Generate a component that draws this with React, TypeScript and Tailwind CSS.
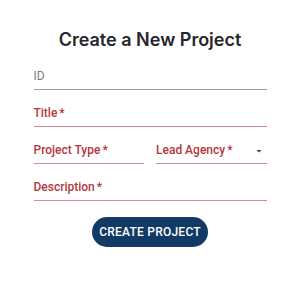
import React from 'react';

function Field({ label, required, error, arrow }: { label: string; required?: boolean; error?: boolean; arrow?: boolean }) {
  return (
    <div
      className={`flex h-[30px] items-end justify-between border-b pb-[5px] ${
        error ? 'border-[#d98a8c]' : 'border-[#9e9e9e]'
      }`}
    >
      <span className={`text-[12px] leading-4 ${error ? 'font-medium text-[#b3373d]' : 'text-[#7a7a7a]'}`}>
        {label}
        {required && <span className="ml-[2px]">*</span>}
      </span>
      {arrow && (
        <svg width="10" height="10" viewBox="0 0 10 10" className="mb-[2px] mr-[3px]">
          <path d="M2.5 4 L7.5 4 L5 6.5 Z" fill="#444" />
        </svg>
      )}
    </div>
  );
}

export default function App() {
  return (
    <div className="flex h-[300px] w-[300px] flex-col items-center bg-white pt-[28px] font-['Roboto',sans-serif]">
      <h1 className="font-['Inter',sans-serif] text-[18px] font-semibold leading-6 text-[#26262e]">
        Create a New Project
      </h1>
      <form className="mt-[8px] flex w-[233px] flex-col gap-[7px]" onSubmit={(e) => e.preventDefault()}>
        <Field label="ID" />
        <Field label="Title" required error />
        <div className="grid grid-cols-2 gap-3">
          <Field label="Project Type" required error />
          <Field label="Lead Agency" required error arrow />
        </div>
        <Field label="Description" required error />
        <div className="mt-[9px] flex justify-center">
          <button
            type="submit"
            className="h-[30px] w-[116px] rounded-full bg-[#123a66] text-[12px] font-medium tracking-[0.02em] text-white"
          >
            CREATE PROJECT
          </button>
        </div>
      </form>
    </div>
  );
}
